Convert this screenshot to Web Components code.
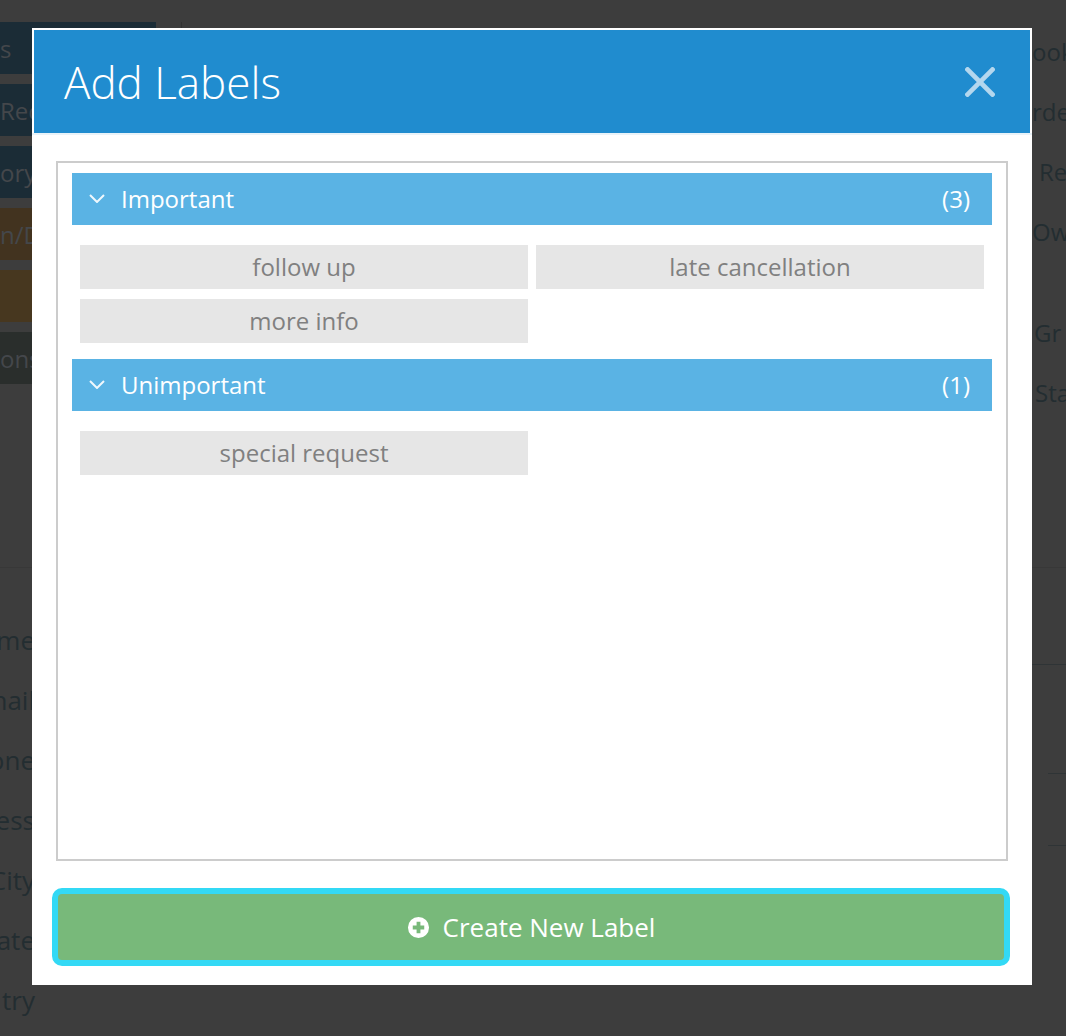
<!DOCTYPE html>
<html>
<head>
<meta charset="utf-8">
<style>
  html, body { margin: 0; height: 100%; background: #3d3d3d; overflow: hidden; font-family: "Open Sans", "Liberation Sans", sans-serif; }
</style>
</head>
<body>
<dimmed-page></dimmed-page>
<label-modal heading="Add Labels">
  <label-group name="Important" count="3">
    <label-chip>follow up</label-chip>
    <label-chip>late cancellation</label-chip>
    <label-chip>more info</label-chip>
  </label-group>
  <label-group name="Unimportant" count="1">
    <label-chip>special request</label-chip>
  </label-group>
</label-modal>

<script>
// Page behind the modal, already darkened. Only the parts that show past the modal are written out
class DimmedPage extends HTMLElement {
    constructor() {
        super();
        this.attachShadow({ mode: 'open' });
        const tabs = [['s', '#1b2c36'], ['Rec', '#1b2c36'], ['ory', '#1b2c36'], ['n/D', '#42331f'], ['', '#47371f'], ['ons', '#2a2e2c']];
        const fields = ['me', 'nail', 'one', 'ess', 'City', 'ate', 'try'];
        this.shadowRoot.innerHTML = `
            <style>
                :host { display: block; width: 1066px; height: 1036px; overflow: hidden; color: #232d31; font-size: 24px; }
                .top { display: grid; grid-template-columns: 156px 1fr 34px; height: 568px; padding-top: 22px; box-sizing: border-box; border-bottom: 1px solid #383838; }
                .tabs { display: flex; flex-direction: column; gap: 10px; }
                .tab { height: 52px; display: flex; align-items: center; color: #44474b; white-space: nowrap; overflow: hidden; }
                .rule { width: 1px; height: 10px; background: #333; margin-left: 25px; }
                .rt { display: flex; flex-direction: column; white-space: nowrap; padding-top: 9px; overflow: hidden; }
                .rt span { height: 60px; line-height: 42px; }
                .rt .gap { height: 41px; }
                .bottom { display: grid; grid-template-columns: 35px 1fr 34px; }
                .fields { padding-top: 52px; display: flex; flex-direction: column; align-items: flex-end; font-size: 26px; }
                .fields span { height: 60px; line-height: 40px; white-space: nowrap; }
                .lines { display: flex; flex-direction: column; }
                .lines i { display: block; height: 1px; background: #2f3436; }
                .lines .a { margin-top: 96px; }
                .lines .b { margin-top: 108px; margin-left: 16px; }
                .lines .c { margin-top: 71px; margin-left: 16px; }
            </style>
            <div class="top">
                <div class="tabs">${tabs.map(t => `<div class="tab" style="background:${t[1]}">${t[0]}</div>`).join('')}</div>
                <div class="rule"></div>
                <div class="rt">
                    <span>ook</span><span>rde</span><span style="padding-left:7px">Re</span><span>Ow</span>
                    <div class="gap"></div>
                    <span style="padding-left:2px">Gr</span><span style="padding-left:3px">Sta</span>
                </div>
            </div>
            <div class="bottom">
                <div class="fields">${fields.map(f => `<span>${f}</span>`).join('')}</div>
                <div></div>
                <div class="lines"><i class="a"></i><i class="b"></i><i class="c"></i></div>
            </div>
        `;
    }
}
customElements.define('dimmed-page', DimmedPage);

// Blue bar with the title and the close cross
class ModalHeader extends HTMLElement {
    constructor() {
        super();
        this.attachShadow({ mode: 'open' });
        this.shadowRoot.innerHTML = `
            <style>
                :host { display: flex; align-items: center; justify-content: space-between; height: 103px; padding: 0 35px 0 30px; background: #208ccf; color: #fff; box-sizing: border-box; }
                h1 { margin: 0; font-size: 44px; font-weight: 300; line-height: 1; }
                svg { display: block; width: 30px; height: 30px; }
            </style>
            <h1><slot></slot></h1>
            <svg viewBox="0 0 30 30"><path d="M2.5 2.5 27.5 27.5M27.5 2.5 2.5 27.5" stroke="#b4d7ee" stroke-width="4.6" fill="none" stroke-linecap="square"/></svg>
        `;
    }
}
customElements.define('modal-header', ModalHeader);

class LabelChip extends HTMLElement {
    constructor() {
        super();
        this.attachShadow({ mode: 'open' });
        this.shadowRoot.innerHTML = `
            <style>
                :host { display: flex; align-items: center; justify-content: center; height: 44px; box-sizing: border-box; padding-bottom: 2px; background: #e6e6e6; color: #808080; font-size: 24px; }
            </style>
            <slot></slot>
        `;
    }
}
customElements.define('label-chip', LabelChip);

// One collapsible section: header bar + grid of chips
class LabelGroup extends HTMLElement {
    constructor() {
        super();
        this.attachShadow({ mode: 'open' });
        this.shadowRoot.innerHTML = `
            <style>
                :host { display: block; }
                .bar { display: flex; align-items: center; height: 52px; box-sizing: border-box; padding: 0 22px 2px 17px; background: #5ab3e4; color: #fff; font-size: 24px; }
                .bar svg { width: 16px; height: 9px; margin-right: 16px; }
                .name { flex: 1; }
                .chips { display: grid; grid-template-columns: 1fr 1fr; gap: 10px 8px; padding: 20px 8px 16px; }
            </style>
            <div class="bar">
                <svg viewBox="0 0 16 9"><path d="M1 1 8 8 15 1" fill="none" stroke="#fff" stroke-opacity=".9" stroke-width="2"/></svg>
                <span class="name">${this.getAttribute('name')}</span>
                <span>(${this.getAttribute('count')})</span>
            </div>
            <div class="chips"><slot></slot></div>
        `;
    }
}
customElements.define('label-group', LabelGroup);

class CreateButton extends HTMLElement {
    constructor() {
        super();
        this.attachShadow({ mode: 'open' });
        this.shadowRoot.innerHTML = `
            <style>
                :host { display: flex; align-items: center; justify-content: center; gap: 13px; height: 78px; box-sizing: border-box; border: 6px solid #33d9f5; border-radius: 10px; background: #78b97a; color: #fff; font-size: 26px; }
                svg { width: 23px; height: 23px; display: block; }
            </style>
            <svg viewBox="0 0 24 24"><path fill-rule="evenodd" fill="#fff" d="M12 1a11 11 0 1 0 0 22 11 11 0 0 0 0-22ZM10 6h4v4h4v4h-4v4h-4v-4H6v-4h4Z"/></svg>
            <slot></slot>
        `;
    }
}
customElements.define('create-button', CreateButton);

class LabelModal extends HTMLElement {
    constructor() {
        super();
        this.attachShadow({ mode: 'open' });
        this.shadowRoot.innerHTML = `
            <style>
                :host { position: absolute; left: 32px; top: 28px; width: 1000px; height: 957px; box-sizing: border-box; padding: 2px 2px 0; background: #fff; display: flex; flex-direction: column; }
                .sep { height: 2px; background: #e9f3f9; margin: 0 -2px; }
                .list { height: 700px; box-sizing: border-box; margin: 26px 22px 0; border: 2px solid #ccc; padding: 10px 14px; }
                .foot { padding: 27px 20px 0 18px; }
            </style>
            <modal-header>${this.getAttribute('heading')}</modal-header>
            <div class="sep"></div>
            <div class="list"><slot></slot></div>
            <div class="foot"><create-button>Create New Label</create-button></div>
        `;
    }
}
customElements.define('label-modal', LabelModal);
</script>
</body>
</html>
